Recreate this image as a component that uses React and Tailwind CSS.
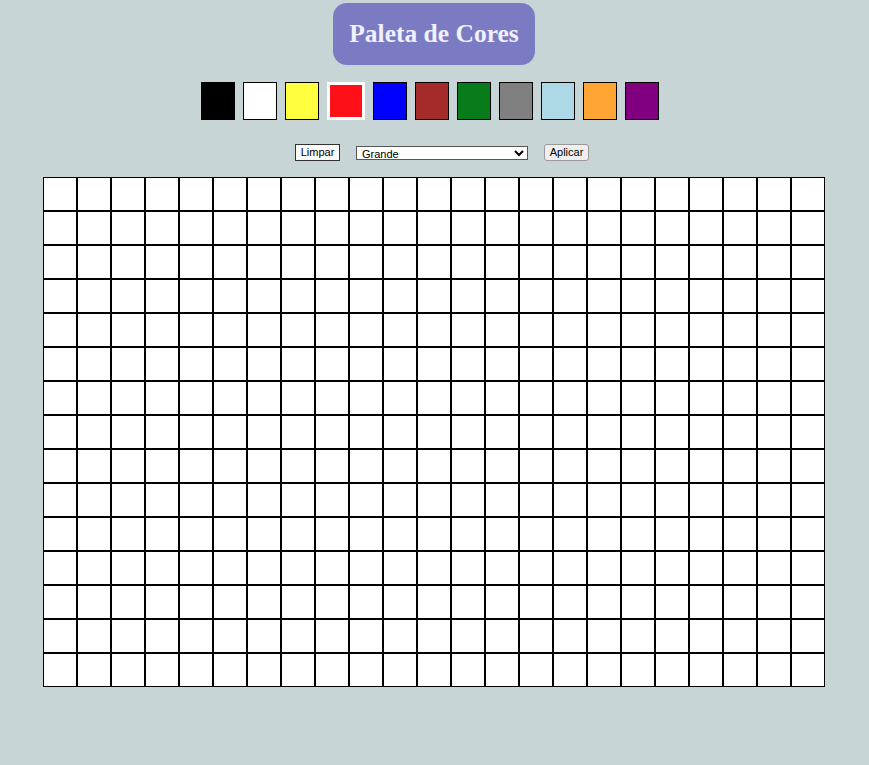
import { useState } from "react";

const colors = [
  "#000000",
  "#ffffff",
  "#ffff40",
  "#ff0f18",
  "#0000ff",
  "#a52a2a",
  "#087c1a",
  "#808080",
  "#add8e6",
  "#ffa533",
  "#800080",
];

export default function App() {
  const [selected, setSelected] = useState(3);
  const rows = 15;
  const cols = 23;

  return (
    <div className="min-h-[765px] bg-[#c7d5d6] font-['Liberation_Sans',Arial,sans-serif]">
      {/* TITLE */}
      <div className="flex justify-center pt-[3px] pr-[1px]">
        <h1 className="h-[62px] px-[16px] flex items-center rounded-[14px] bg-[#7b7bc3] text-[#f0f0ff] font-['Liberation_Serif',serif] font-bold text-[25.5px]">
          Paleta de Cores
        </h1>
      </div>

      {/* PALETTE */}
      <div className="flex justify-center items-center gap-[8px] mt-[17px] pr-[9px]">
        {colors.map((c, i) =>
          i === selected ? (
            <div
              key={c}
              onClick={() => setSelected(i)}
              className="w-[38px] h-[38px] border-[3px] border-white"
              style={{ backgroundColor: c }}
            />
          ) : (
            <div
              key={c}
              onClick={() => setSelected(i)}
              className="w-[34px] h-[38px] border border-black"
              style={{ backgroundColor: c }}
            />
          )
        )}
      </div>

      {/* CONTROLS */}
      <div className="flex justify-center items-center mt-[24px] pl-[15px] text-[11px] text-black">
        <button className="w-[45px] h-[17px] bg-[#fafafa] border border-[#333] leading-none">
          Limpar
        </button>
        <select
          defaultValue="Grande"
          className="ml-[16px] w-[172px] h-[14px] bg-white border border-[#555] text-[11px] leading-none px-[1px] appearance-auto"
        >
          <option>Pequeno</option>
          <option>Médio</option>
          <option>Grande</option>
        </select>
        <button className="ml-[16px] w-[45px] h-[17px] bg-[#efefef] border border-[#999] rounded-[3px] leading-none">
          Aplicar
        </button>
      </div>

      {/* BOARD */}
      <div className="flex justify-center mt-[16px] pr-[1px]">
        <div className="grid grid-cols-[repeat(23,34px)]">
          {Array.from({ length: rows * cols }).map((_, i) => (
            <div key={i} className="w-[34px] h-[34px] bg-white border border-black" />
          ))}
        </div>
      </div>
    </div>
  );
}
